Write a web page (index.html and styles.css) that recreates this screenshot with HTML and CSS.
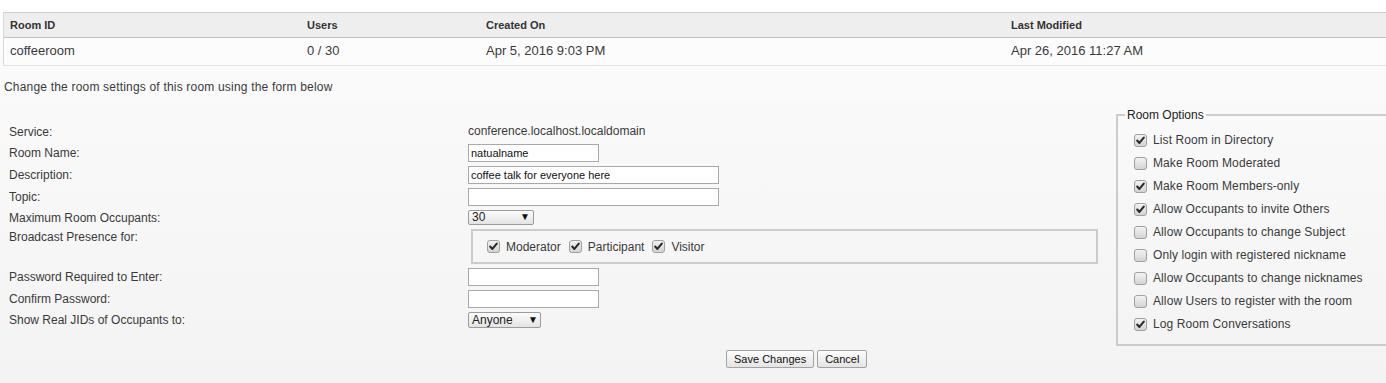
FILE: index.html
```html
<!DOCTYPE html>
<html lang="en">
<head>
    <meta charset="UTF-8">
    <title>Room Settings</title>
    <link rel="stylesheet" href="styles.css">
</head>
<body>
    <svg class="defs" width="0" height="0">
        <defs>
            <linearGradient id="boxfill" x1="0" y1="0" x2="0" y2="1">
                <stop offset="0" stop-color="#f4f4f4"/>
                <stop offset="1" stop-color="#d2d2d2"/>
            </linearGradient>
            <symbol id="box" viewBox="0 0 13 13">
                <rect x="0.5" y="0.5" width="12" height="12" rx="2.5" fill="url(#boxfill)" stroke="#a0a0a0"/>
            </symbol>
            <symbol id="tick" viewBox="0 0 13 13">
                <rect x="0.5" y="0.5" width="12" height="12" rx="2.5" fill="url(#boxfill)" stroke="#a0a0a0"/>
                <path d="M3.2 6.6 L5.4 8.9 L9.8 3.6" fill="none" stroke="#2a2a2a" stroke-width="2.1" stroke-linecap="round" stroke-linejoin="round"/>
            </symbol>
        </defs>
    </svg>

    <!-- room summary -->
    <table class="room-list">
        <colgroup>
            <col class="c-id"><col class="c-users"><col class="c-created"><col>
        </colgroup>
        <thead>
            <tr><th class="first">Room ID</th><th>Users</th><th>Created On</th><th>Last Modified</th></tr>
        </thead>
        <tbody>
            <tr><td class="first">coffeeroom</td><td>0 / 30</td><td>Apr 5, 2016 9:03 PM</td><td>Apr 26, 2016 11:27 AM</td></tr>
        </tbody>
    </table>

    <p class="intro">Change the room settings of this room using the form below</p>

    <form class="room-form">
        <div class="settings">
            <span class="label">Service:</span>
            <span class="value">conference.localhost.localdomain</span>

            <span class="label">Room Name:</span>
            <span><input class="field short" type="text" value="natualname"></span>

            <span class="label">Description:</span>
            <span><input class="field long" type="text" value="coffee talk for everyone here"></span>

            <span class="label">Topic:</span>
            <span><input class="field long" type="text" value=""></span>

            <span class="label">Maximum Room Occupants:</span>
            <span><span class="dropdown occupants"><select><option>30</option></select></span></span>

            <span class="label top">Broadcast Presence for:</span>
            <fieldset class="broadcast">
                <label class="check"><svg class="box"><use href="#tick"/></svg>Moderator</label>
                <label class="check"><svg class="box"><use href="#tick"/></svg>Participant</label>
                <label class="check"><svg class="box"><use href="#tick"/></svg>Visitor</label>
            </fieldset>

            <span class="label">Password Required to Enter:</span>
            <span><input class="field short" type="password" value=""></span>

            <span class="label">Confirm Password:</span>
            <span><input class="field short" type="password" value=""></span>

            <span class="label">Show Real JIDs of Occupants to:</span>
            <span><span class="dropdown jids"><select><option>Anyone</option></select></span></span>
        </div>

        <fieldset class="options">
            <legend>Room Options</legend>
            <label class="check"><svg class="box"><use href="#tick"/></svg>List Room in Directory</label>
            <label class="check"><svg class="box"><use href="#box"/></svg>Make Room Moderated</label>
            <label class="check"><svg class="box"><use href="#tick"/></svg>Make Room Members-only</label>
            <label class="check"><svg class="box"><use href="#tick"/></svg>Allow Occupants to invite Others</label>
            <label class="check"><svg class="box"><use href="#box"/></svg>Allow Occupants to change Subject</label>
            <label class="check"><svg class="box"><use href="#box"/></svg>Only login with registered nickname</label>
            <label class="check"><svg class="box"><use href="#box"/></svg>Allow Occupants to change nicknames</label>
            <label class="check"><svg class="box"><use href="#box"/></svg>Allow Users to register with the room</label>
            <label class="check"><svg class="box"><use href="#tick"/></svg>Log Room Conversations</label>
        </fieldset>
    </form>

    <div class="actions">
        <button class="btn" type="button">Save Changes</button>
        <button class="btn" type="button">Cancel</button>
    </div>
</body>
</html>
```

FILE: styles.css
```css
/* page */
html {
  background: linear-gradient(#ffffff 0px, #fafafa 80px, #f3f3f3 383px);
  min-height: 100%;
}

body {
  margin: 0;
  padding: 0;
  font-family: "Liberation Sans", Arial, sans-serif;
  color: #3a3a3a;
  overflow: hidden;
}

.defs {
  position: absolute;
  width: 0;
  height: 0;
}

/* room summary table */
.room-list {
  margin: 12px 0 0 3px;
  width: 1420px;
  table-layout: fixed;
  border-spacing: 0;
  font-size: 13px;
}

.c-id { width: 298px; }
.c-users { width: 179px; }
.c-created { width: 525px; }

.room-list th {
  text-align: left;
  font-size: 11px;
  font-weight: bold;
  line-height: 14px;
  padding: 5px 6px;
  color: #333;
  background-color: #eeeeee;
  border-top: 1px solid #cdcdcd;
  border-bottom: 1px solid #c4c4c4;
}

.room-list td {
  line-height: 14px;
  padding: 6px 6px 7px;
  background-color: #fcfcfc;
  border-bottom: 1px solid #e2e2e2;
}

.room-list .first {
  border-left: 1px solid #d8d8d8;
  padding-left: 6px;
}

.intro {
  margin: 14px 0 14px 4px;
  font-size: 12px;
  line-height: 14px;
  letter-spacing: 0.19px;
}

/* settings form */
.room-form {
  display: flex;
  align-items: flex-start;
}

.settings {
  flex-shrink: 0;
  width: 1092px;
  margin-left: 9px;
  padding-top: 15px;
  display: grid;
  grid-template-columns: 459px 1fr;
  row-gap: 4px;
  align-items: center;
  font-size: 12px;
}

.settings > :nth-child(2) {
  margin-top: -1px;
}

.label {
  line-height: 14px;
}

.label.top {
  align-self: start;
  margin-top: 1px;
}

.value {
  line-height: 18px;
}

.field {
  display: block;
  box-sizing: border-box;
  height: 18px;
  margin: 0;
  padding: 1px 2px;
  border: 1px solid #a9a9a9;
  background: #fff;
  font-family: "Liberation Sans", Arial, sans-serif;
  font-size: 11px;
  color: #111;
}

.field.short { width: 131px; }
.field.long { width: 251px; }

.dropdown {
  position: relative;
  display: block;
}

.dropdown select {
  display: block;
  appearance: none;
  -webkit-appearance: none;
  box-sizing: border-box;
  margin: 0;
  padding: 0 0 0 3px;
  border: 1px solid #9b9b9b;
  border-radius: 2px;
  background: linear-gradient(#fdfdfd, #e3e3e3);
  font-family: "Liberation Sans", Arial, sans-serif;
  font-size: 12px;
  color: #222;
}

.dropdown::after {
  content: "\25BC";
  position: absolute;
  top: 3px;
  font-size: 10px;
  line-height: 10px;
  color: #111;
  pointer-events: none;
}

.occupants select { width: 66px; height: 15px; line-height: 13px; }
.occupants::after { left: 52px; top: 2px; }

.jids select { width: 73px; height: 16px; line-height: 14px; }
.jids::after { left: 60px; top: 3px; }

.broadcast {
  box-sizing: border-box;
  height: 35px;
  margin: 0 3px;
  padding: 0 0 0 14px;
  border: 2px solid #cccccc;
  display: flex;
  align-items: center;
  gap: 8px;
  min-width: 0;
}

.check {
  display: flex;
  align-items: center;
  gap: 6px;
  font-size: 12px;
  line-height: 14px;
}

.box {
  width: 13px;
  height: 13px;
  flex-shrink: 0;
}

/* room options box */
.options {
  flex-shrink: 0;
  width: 330px;
  margin: 0 0 0 15px;
  padding: 7px 10px 8px 16px;
  border: 2px solid #cccccc;
  display: flex;
  flex-direction: column;
}

.options legend {
  margin-left: -9px;
  padding: 0 2px;
  font-size: 12px;
  line-height: 14px;
  color: #222;
}

.options .check {
  line-height: 23px;
  letter-spacing: 0.1px;
}

/* buttons */
.actions {
  margin-top: 4px;
  padding-left: 726px;
  display: flex;
  gap: 3px;
}

.btn {
  height: 18px;
  margin: 0;
  padding: 0 7px;
  border: 1px solid #a2a2a2;
  border-radius: 2px;
  background: linear-gradient(#fdfdfd, #e4e4e4);
  font-family: "Liberation Sans", Arial, sans-serif;
  font-size: 11px;
  line-height: 16px;
  color: #111;
  cursor: pointer;
}
```
